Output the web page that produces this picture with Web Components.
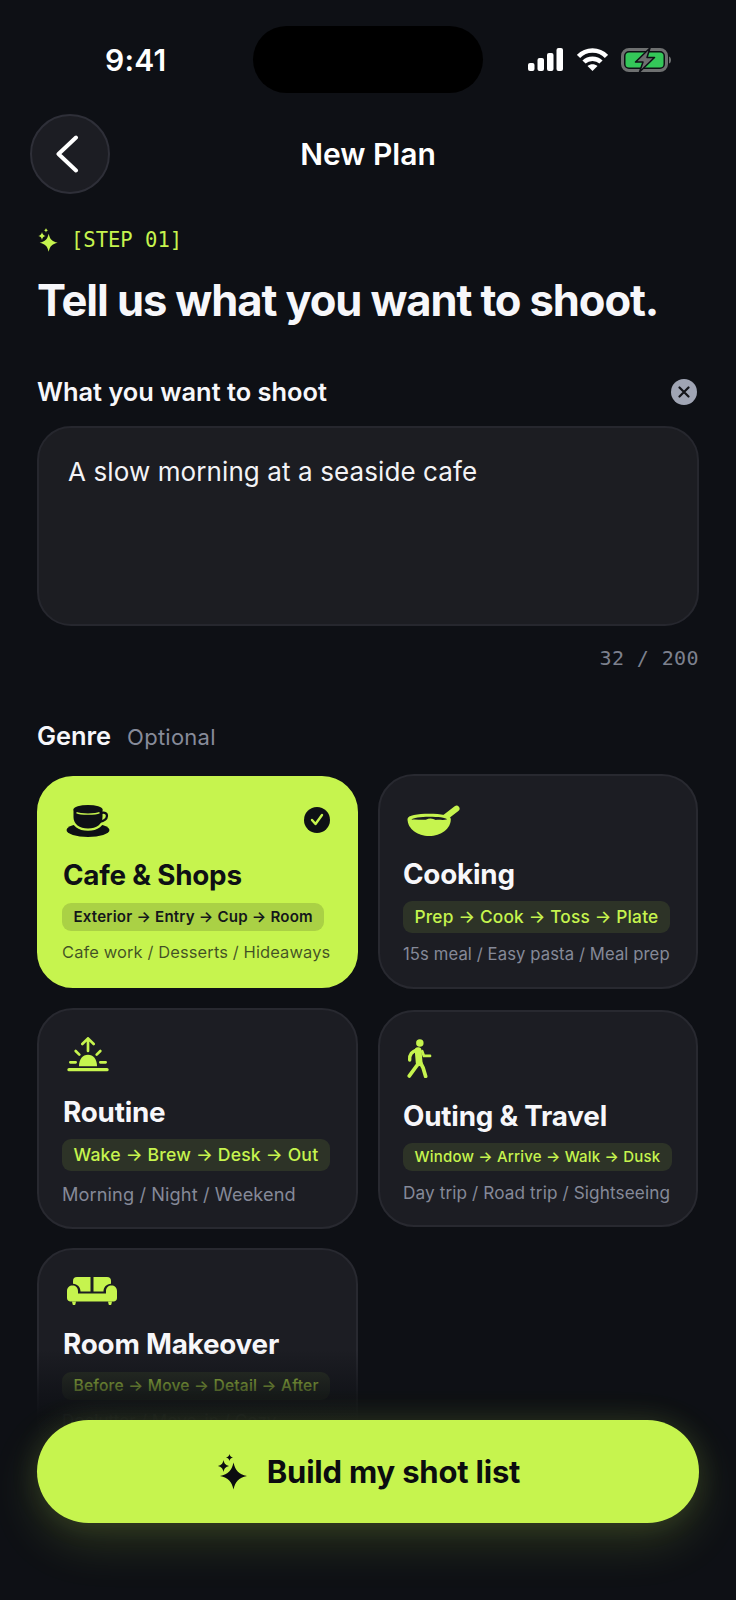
<!DOCTYPE html>
<html lang="en">
<head>
<meta charset="utf-8">
<title>New Plan</title>
<style>
  html, body { margin: 0; padding: 0; background: #0e1015; }
  body { font-family: Inter, "Noto Sans", sans-serif; color: #f7f7fa; }
  svg { display: block; }
</style>
</head>
<body>
<plan-app>
  <status-bar></status-bar>
  <nav-header title="New Plan"></nav-header>
  <step-heading step="[STEP 01]" heading="Tell us what you want to shoot."></step-heading>
  <prompt-field label="What you want to shoot" value="A slow morning at a seaside cafe" count="32 / 200"></prompt-field>
  <section-label name="Genre" note="Optional"></section-label>
  <genre-grid>
    <genre-card selected name="Cafe &amp; Shops" flow="Exterior → Entry → Cup → Room" tags="Cafe work / Desserts / Hideaways" fs="15.1" ts="16.5" top="27" bot="22" gap="23" sg="9" tl="1" cg="13">
      <svg slot="icon" width="44" height="32" viewBox="0 0 130 97" style="margin-left:4px">
        <ellipse cx="65" cy="76" rx="65" ry="21" fill="#0e1015"/>
        <path d="M14 14v22c0 26 22 42 51 42s51-16 51-42V14z" fill="#c6f44e"/>
        <path d="M21 14v22c0 22 18 35 44 35s44-13 44-35V14z" fill="#0e1015"/>
        <ellipse cx="65" cy="14" rx="44" ry="14" fill="#0e1015"/>
        <path d="M30 23c12 6 58 6 70 0" fill="none" stroke="#c6f44e" stroke-width="4"/>
        <path d="M106 24c22-6 24 22-6 27" fill="none" stroke="#0e1015" stroke-width="7"/>
      </svg>
    </genre-card>
    <genre-card name="Cooking" flow="Prep → Cook → Toss → Plate" tags="15s meal / Easy pasta / Meal prep" fs="17.3" ts="16.65" top="29" bot="21" gap="23" sg="9" tl="0" cg="12">
      <svg slot="icon" width="53" height="31" viewBox="0 0 156 93" style="margin-left:4px">
        <path d="M112 38L147 11" stroke="#c6f44e" stroke-width="18" stroke-linecap="round"/>
        <path d="M0 42C0 30 30 26 65 26s65 4 65 16c0 30-30 51-65 51S0 72 0 42z" fill="#c6f44e"/>
        <path d="M12 44c3-6 28-9 53-9s50 2 54 8c-12 4-24 0-34 2-10-6-20-6-30-1-14 2-28-2-43 0z" fill="#1c1d23"/>
      </svg>
    </genre-card>
    <genre-card name="Routine" flow="Wake → Brew → Desk → Out" tags="Morning / Night / Weekend" fs="17.6" ts="18.2" top="27" bot="21" gap="25" sg="11" tl="1" cg="12">
      <svg slot="icon" width="42" height="35" viewBox="0 0 124 105" style="margin-left:5px" fill="none" stroke="#c6f44e" stroke-linecap="round" stroke-linejoin="round">
        <path d="M5 98h114" stroke-width="10"/>
        <path d="M35 88C35 66 46 53 62 53s27 13 27 35z" fill="#c6f44e" stroke="none"/>
        <path d="M62 42V5M45 21L62 4l17 17" stroke-width="8"/>
        <path d="M25 42l11 11M99 42L88 53M9 76h16M99 76h16" stroke-width="8"/>
      </svg>
    </genre-card>
    <genre-card name="Outing &amp; Travel" flow="Window → Arrive → Walk → Dusk" tags="Day trip / Road trip / Sightseeing" fs="15" ts="17.2" top="27" bot="20" gap="23" sg="10" tl="0" cg="12">
      <svg slot="icon" width="25" height="39" viewBox="0 0 72 115" style="margin-left:4px" fill="none" stroke="#c6f44e" stroke-linecap="round" stroke-linejoin="round">
        <circle cx="37" cy="12" r="11" fill="#c6f44e" stroke="none"/>
        <path d="M32 34l3 36" stroke-width="20"/>
        <path d="M28 32C14 38 6 44 7 62" stroke-width="10"/>
        <path d="M44 36l5 14h18" stroke-width="8"/>
        <path d="M30 76L6 109" stroke-width="11"/>
        <path d="M38 68l9 18 7 24" stroke-width="11"/>
      </svg>
    </genre-card>
    <genre-card name="Room Makeover" flow="Before → Move → Detail → After" tags="Declutter / Move-in / Cozy" fs="15.6" ts="17" top="27" bot="20" gap="24" sg="9" tl="1" cg="13">
      <svg slot="icon" width="50" height="28" viewBox="0 0 50 28" style="margin-left:5px" fill="#c6f44e">
        <path d="M6 6.800V4a4 4 0 0 1 4-4h13.500v14.500h-10c0-4-3-7.700-7.500-7.700z"/>
        <path d="M44 6.800V4a4 4 0 0 0-4-4H26.500v14.500h10c0-4 3-7.700 7.500-7.700z"/>
        <path d="M0 14c0-3.500 2.500-5.500 5.500-5.500S11 10.500 11 14v2.500h28V14c0-3.500 2.500-5.500 5.500-5.500S50 10.500 50 14v7c0 2-1.500 3.500-3.500 3.500h-43C1.500 24.500 0 23 0 21z"/>
        <path d="M5 24.500h4l-.5 2.200a1.500 1.500 0 0 1-3 0zM41 24.500h4l-.5 2.200a1.500 1.500 0 0 1-3 0z"/>
      </svg>
    </genre-card>
  </genre-grid>
  <cta-bar label="Build my shot list"></cta-bar>
</plan-app>

<script>
const SPARK = 'M17.500 8.500C19.300 16.500 22.500 20.300 31 22 22.500 23.700 19.300 27.500 17.500 35.500 15.700 27.500 12.500 23.700 4 22 12.500 20.300 15.700 16.500 17.500 8.500Z' +
  'M7.500 6C8.200 9.500 9.500 11 13 12 9.500 13 8.200 14.500 7.500 18 6.800 14.500 5.500 13 2 12 5.500 11 6.800 9.500 7.500 6Z' +
  'M13.500 0C13.900 2 14.700 2.900 17 3.500 14.700 4.100 13.900 5 13.500 7 13.100 5 12.300 4.100 10 3.500 12.300 2.900 13.100 2 13.500 0Z';

function define(name, html) {
  customElements.define(name, class extends HTMLElement {
    connectedCallback() {
      if (this.shadowRoot) return;
      const root = this.attachShadow({ mode: 'open' });
      const data = {};
      for (const a of this.attributes) data[a.name] = a.value;
      root.innerHTML = html(data);
    }
  });
}

define('plan-app', () => `
  <style>
    :host { display: block; position: relative; width: 736px; height: 1600px; overflow: hidden; background: #0e1015; }
  </style>
  <slot></slot>`);

define('status-bar', () => `
  <style>
    :host { display: flex; align-items: center; height: 67px; padding: 26px 0 21px 105px; color: #fff; }
    .time { width: 148px; font: 600 30px/36px Inter, sans-serif; letter-spacing: .2px; }
    .island { width: 230px; height: 67px; border-radius: 34px; background: #000; }
    .icons { display: flex; align-items: center; gap: 14px; margin-left: 45px; }
  </style>
  <div class="time">9:41</div>
  <div class="island"></div>
  <div class="icons">
    <svg width="35" height="23" viewBox="0 0 35 23" fill="#fff">
      <rect x="0" y="15" width="6.500" height="8" rx="2"/><rect x="9.500" y="10" width="6.500" height="13" rx="2"/>
      <rect x="19" y="5" width="6.500" height="18" rx="2"/><rect x="28.500" y="0" width="6.500" height="23" rx="2"/>
    </svg>
    <svg width="31" height="23" viewBox="0 0 31 23" fill="none" stroke="#fff" stroke-width="4.500">
      <path d="M1.500 8.500C9 .5 22 .5 29.500 8.500"/><path d="M7 14c4.500-4.500 12.500-4.500 17 0"/>
      <path d="M10.500 18L15.500 23l5-5c-3-2.500-7-2.500-10 0z" fill="#fff" stroke="none"/>
    </svg>
    <svg width="50" height="24" viewBox="0 0 50 24" style="margin-left:-1px">
      <rect x="1.500" y="1.500" width="44" height="21" rx="6.500" fill="none" stroke="#6e7070" stroke-width="3"/>
      <rect x="4.500" y="4.500" width="38" height="15" rx="3.500" fill="#34c759"/>
      <path d="M48 8.500c1.500.5 2 2 2 3.500s-.5 3-2 3.500z" fill="#6e7070"/>
      <path d="M29 0L14.500 14h7.500l-3.500 10 15-14.500h-7.500z" fill="#6e7070" stroke="#0e1015" stroke-width="1.500" stroke-linejoin="round"/>
    </svg>
  </div>`);

define('nav-header', d => `
  <style>
    :host { display: flex; align-items: center; height: 80px; padding-left: 30px; }
    .back { width: 80px; height: 80px; box-sizing: border-box; border-radius: 50%; background: #1c1d23; border: 2px solid #2e2f38; display: flex; align-items: center; justify-content: center; flex: none; }
    .title { flex: 1; text-align: center; margin-left: -80px; padding-right: 30px; font: 600 30px/36px Inter, sans-serif; color: #fff; }
  </style>
  <div class="back">
    <svg width="24" height="38" viewBox="0 0 24 38" fill="none" stroke="#fff" stroke-width="4" stroke-linecap="round" stroke-linejoin="round" style="margin-right:6px">
      <path d="M21 2.500L3.500 19 21 35.500"/>
    </svg>
  </div>
  <div class="title">${d.title}</div>`);

define('step-heading', d => `
  <style>
    :host { display: block; padding: 0 37px; margin-top: 32px; }
    .step { display: flex; align-items: center; gap: 13px; height: 28px; color: #c6f44e; font: 400 20.500px/28px "DejaVu Sans Mono", monospace; padding-left: 1px; }
    h1 { margin: 20px 0 0; font: 700 43.500px/52px Inter, sans-serif; letter-spacing: -1.1px; color: #f7f7fa; white-space: nowrap; }
  </style>
  <div class="step">
    <svg width="20" height="24" viewBox="2 0 29 36" fill="#c6f44e"><path d="${SPARK}"/></svg>
    <span>${d.step}</span>
  </div>
  <h1>${d.heading}</h1>`);

define('prompt-field', d => `
  <style>
    :host { display: block; padding: 0 37px; margin-top: 50px; }
    .head { display: flex; align-items: center; justify-content: space-between; height: 32px; font: 600 25.400px/32px Inter, sans-serif; color: #f7f7fa; padding-right: 2px; }
    .clear { width: 26px; height: 26px; border-radius: 50%; background: #a0a5b4; display: flex; align-items: center; justify-content: center; }
    .box { box-sizing: border-box; height: 200px; margin-top: 18px; padding: 26px 29px; border-radius: 34px; background: #1c1d22; border: 2px solid #26272e; font: 400 26px/36px Inter, sans-serif; letter-spacing: .1px; color: #f3f3f6; }
    .count { margin-top: 19px; height: 26px; text-align: right; font: 400 20px/26px "DejaVu Sans Mono", monospace; letter-spacing: .4px; color: #7d818e; }
  </style>
  <div class="head">
    <span>${d.label}</span>
    <span class="clear"><svg width="12" height="12" viewBox="0 0 12 12" stroke="#14151a" stroke-width="2.200" stroke-linecap="round"><path d="M1.500 1.500l9 9M10.500 1.500l-9 9"/></svg></span>
  </div>
  <div class="box">${d.value}</div>
  <div class="count">${d.count}</div>`);

define('section-label', d => `
  <style>
    :host { display: flex; align-items: baseline; gap: 16px; padding: 0 37px; margin-top: 49px; height: 32px; }
    b { font: 600 25.400px/32px Inter, sans-serif; color: #f7f7fa; }
    span { font: 400 22px/32px Inter, sans-serif; letter-spacing: .25px; color: #878b9a; }
  </style>
  <b>${d.name}</b><span>${d.note}</span>`);

define('genre-grid', () => `
  <style>
    :host { display: grid; grid-template-columns: 321px 320px; column-gap: 20px; row-gap: 19px; align-items: center; align-content: start; padding: 0 37px; margin-top: 22px; }
  </style>
  <slot></slot>`);

define('genre-card', d => {
  const sel = 'selected' in d;
  return `
  <style>
    :host { display: block; box-sizing: border-box; border-radius: 36px; padding: ${d.top}px 23px ${d.bot}px; position: relative;
      border: 2px solid ${sel ? '#c6f44e' : '#282930'}; background: ${sel ? '#c6f44e' : '#1c1d23'}; color: ${sel ? '#0e1015' : '#f7f7fa'}; }
    .icon { display: block; }
    h3 { margin: ${d.gap}px 0 0 ${d.tl}px; font: 700 27.800px/30px Inter, sans-serif; letter-spacing: -.2px; white-space: nowrap; }
    .flow { display: block; width: fit-content; box-sizing: border-box; margin-top: ${d.cg}px; padding: 0 11.500px; border-radius: 9px; white-space: nowrap;
      font: ${sel ? 600 : 500} ${d.fs}px/${+d.fs < 16 ? 28 : 32}px Inter, sans-serif; letter-spacing: .2px;
      background: ${sel ? 'rgba(14,16,21,.15)' : 'rgba(198,244,78,.1)'}; color: ${sel ? '#14161a' : '#c6f44e'}; }
    p { margin: ${d.sg}px 0 0; font: 400 ${d.ts}px/24px Inter, sans-serif; letter-spacing: .1px; white-space: nowrap; color: ${sel ? 'rgba(14,16,21,.72)' : '#858998'}; }
    .check { position: absolute; top: 29px; right: 26px; width: 26px; height: 26px; border-radius: 50%; background: #0e1015; display: ${sel ? 'flex' : 'none'}; align-items: center; justify-content: center; }
  </style>
  <div class="icon"><slot name="icon"></slot></div>
  <span class="check"><svg width="14" height="13" viewBox="0 0 14 13" fill="none" stroke="#c6f44e" stroke-width="2.400" stroke-linecap="round" stroke-linejoin="round"><path d="M2 7l3.500 4L12 2"/></svg></span>
  <h3>${d.name}</h3>
  <span class="flow">${d.flow}</span>
  <p>${d.tags}</p>`;
});

define('cta-bar', d => `
  <style>
    :host { position: absolute; left: 0; right: 0; bottom: 0; height: 250px; box-sizing: border-box; padding: 70px 37px 0;
      background: linear-gradient(to bottom, rgba(14,16,21,0) 0, rgba(14,16,21,.72) 45px, rgba(14,16,21,.97) 65px, #0e1015 100%); }
    .btn { height: 103px; border-radius: 52px; background: #c6f44e; display: flex; align-items: center; justify-content: center; gap: 18px; color: #0b0c10;
      font: 700 31px/40px Inter, sans-serif; letter-spacing: -.2px; box-shadow: 0 18px 50px rgba(198,244,78,.16), 0 0 30px rgba(198,244,78,.11); }
  </style>
  <div class="btn">
    <svg width="33" height="36" viewBox="0 0 33 36" fill="#0b0c10"><path d="${SPARK}"/></svg>
    <span>${d.label}</span>
  </div>`);
</script>
</body>
</html>
